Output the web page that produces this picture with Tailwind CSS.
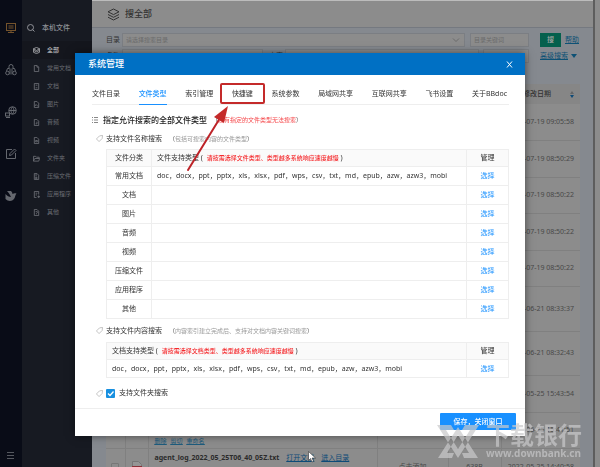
<!DOCTYPE html>
<html lang="zh-CN">
<head>
  <meta charset="UTF-8" />
  <meta name="viewport" content="width=device-width, initial-scale=1" />
  <title>系统管理</title>
  <script src="https://cdn.jsdelivr.net/npm/@tailwindcss/browser@4"></script>
</head>
<body class="h-screen overflow-hidden bg-[#85898f] font-['Noto_Sans','Noto_Sans_CJK_SC',sans-serif] text-[7px] leading-[10px] text-[#333]">

  <div class="flex h-full">
    <!-- Icon rail -->
    <nav class="flex w-[22px] shrink-0 flex-col items-center justify-between bg-[#090c17] pt-[22px] pb-2 text-[#65686f]" aria-label="模块">
      <div class="flex flex-col gap-[30px]">
        <a href="#" class="text-[#74532c]" aria-label="本机">
          <svg class="size-3" viewBox="0 0 12 12" fill="none" stroke="currentColor"><rect x="1.500" y="1.500" width="9" height="7"/><path d="M3.500 4h5M3.500 6h5M3 10.500h6M6 8.500v2"/></svg>
        </a>
        <a href="#" aria-label="团队">
          <svg class="size-3" viewBox="0 0 12 12" fill="none" stroke="currentColor"><path d="M4 5V2.500a2 2 0 0 1 4 0V5M5 4.500v6M7 4.500v6M4 4.500H2.500L1.500 7M8 4.500h1.500l1 2.500"/><circle cx="2.500" cy="9" r="1.800"/><circle cx="9.500" cy="9" r="1.800"/></svg>
        </a>
        <a href="#" aria-label="网络">
          <svg class="size-3" viewBox="0 0 12 12" fill="none" stroke="currentColor"><circle cx="7.500" cy="4.500" r="3.800"/><path d="M4 4.500h7M7.500 1c-2 2-2 5 0 7c2-2 2-5 0-7"/><rect x=".5" y="7" width="4" height="3" fill="#090c17"/><path d="M1 11.500h4"/></svg>
        </a>
        <a href="#" aria-label="编辑">
          <svg class="size-3" viewBox="0 0 12 12" fill="none" stroke="currentColor"><path d="M7 1.500H1.500v9h9V5M4.500 7.500l.5-2L9.500 1l1.500 1.500L6.500 7z"/></svg>
        </a>
        <a href="#" aria-label="飞书">
          <svg class="size-3" viewBox="0 0 12 12" fill="currentColor"><path d="M2 1h4c1 1 1.500 2 1.500 3C9 3 10 3 11.500 3.500C10 5 10.500 7 9 9c-2 2.500-6 2.500-8.500 0V4C2 6 4 7 6 7C5 5 4 3 2 1z"/></svg>
        </a>
      </div>
      <button type="button" aria-label="菜单" class="text-[#55585f]">
        <svg class="block size-2" viewBox="0 0 8 8" stroke="currentColor"><path d="M0 1.500h7M0 4.500h7M0 7.500h7"/></svg>
      </button>
    </nav>

    <!-- File categories -->
    <aside class="w-[70px] shrink-0 bg-[#171a22] pt-[20px] text-[6px] text-[#6a6d73]">
      <h2 class="flex h-4 items-center gap-[7px] pl-[5px] text-[7px] font-medium text-[#909298]">
        <svg class="size-2" viewBox="0 0 8 8" fill="none" stroke="currentColor"><circle cx="3.500" cy="3.500" r="3"/><path d="M5.500 5.500l2 2"/></svg>
        本机文件
      </h2>
      <ul class="pt-[5px]">
        <li><a href="#" class="flex h-[18px] items-center gap-[7px] bg-[#14161d] pl-[11px] font-bold text-[#a4a5a8]"><svg class="size-[7px]" viewBox="0 0 8 8" fill="none" stroke="currentColor"><path d="M4 .5l3.500 1.500L4 4L.5 2zM.5 2v4L4 7.500L7.500 6V2M1 4l3 1.500L7 4"/></svg>全部</a></li>
        <li><a href="#" class="flex h-[18px] items-center gap-[7px] pl-[11px]"><svg class="size-[7px]" viewBox="0 0 8 8" fill="none" stroke="currentColor"><path d="M1.500.5h3l2 2v5h-5zM4.500.5v2h2"/></svg>常用文档</a></li>
        <li><a href="#" class="flex h-[18px] items-center gap-[7px] pl-[11px]"><svg class="size-[7px]" viewBox="0 0 8 8" fill="none" stroke="currentColor"><path d="M1.500.5h5v7h-5zM3 2.500h2M3 5.500h2"/></svg>文档</a></li>
        <li><a href="#" class="flex h-[18px] items-center gap-[7px] pl-[11px]"><svg class="size-[7px]" viewBox="0 0 8 8" fill="none" stroke="currentColor"><path d="M1.500.5h3l2 2v5h-5zM2 6l1.500-2L6 6.500"/></svg>图片</a></li>
        <li><a href="#" class="flex h-[18px] items-center gap-[7px] pl-[11px]"><svg class="size-[7px]" viewBox="0 0 8 8" fill="none" stroke="currentColor"><path d="M1.500.5h3l2 2v5h-5zM4.500 3v2.500H3"/></svg>音频</a></li>
        <li><a href="#" class="flex h-[18px] items-center gap-[7px] pl-[11px]"><svg class="size-[7px]" viewBox="0 0 8 8" fill="none" stroke="currentColor"><path d="M1.500.5h3l2 2v5h-5zM3 4h2v1.500H3z"/></svg>视频</a></li>
        <li><a href="#" class="flex h-[18px] items-center gap-[7px] pl-[11px]"><svg class="size-[7px]" viewBox="0 0 8 8" fill="none" stroke="currentColor"><path d="M.5 7V1.500h2.500l1 1h3V4M.5 7l1.500-3h5.500L6.500 7z"/></svg>文件夹</a></li>
        <li><a href="#" class="flex h-[18px] items-center gap-[7px] pl-[11px]"><svg class="size-[7px]" viewBox="0 0 8 8" fill="none" stroke="currentColor"><path d="M1.500.5h3l2 2v5h-5zM3.500 1v3M3 5h1.500v1.500H3z"/></svg>压缩文件</a></li>
        <li><a href="#" class="flex h-[18px] items-center gap-[7px] pl-[11px]"><svg class="size-[7px]" viewBox="0 0 8 8" fill="none" stroke="currentColor"><path d="M6.500 4V.5h-5v7H4M3 2.500h2M3 4.500h1.500M5 6.500h3M6.500 5v3"/></svg>应用程序</a></li>
        <li><a href="#" class="flex h-[18px] items-center gap-[7px] pl-[11px]"><svg class="size-[7px]" viewBox="0 0 8 8" fill="none" stroke="currentColor"><path d="M1.500.5h3l2 2v5h-5zM3 3h2v1L4 5v1"/></svg>其他</a></li>
      </ul>
    </aside>

    <!-- Search page -->
    <main class="min-w-0 flex-1 overflow-hidden border-t border-[#bcbcbc]">
      <header class="flex h-[27px] items-center gap-[5px] border-b border-[#757980] bg-[#8c8c8c] px-[15px]">
        <svg class="size-[13px]" viewBox="0 0 13 13" fill="none" stroke="#333"><path d="M6.500 1L12 3.800L6.500 6.600L1 3.800zM1 6.500l5.500 2.800L12 6.500M1 9.200L6.500 12L12 9.200"/></svg>
        <h1 class="text-[9px] font-medium">搜全部</h1>
      </header>

      <form class="flex gap-[11px] py-[5px] pr-[13px] pl-[14px]">
        <div class="flex min-w-0 flex-1 flex-col gap-0.5">
          <div class="flex items-center gap-[2px]">
            <label for="dir" class="w-[14px]">目录</label>
            <div class="relative flex-1">
              <select id="dir" class="block h-[14px] w-full appearance-none border border-[#7b7e83] bg-[#8c8c8c] px-[3px] text-[6px] text-[#6b6b6b]"><option>请选择搜索目录</option></select>
              <svg class="pointer-events-none absolute top-1 right-[5px] h-1.5 w-2" viewBox="0 0 8 6" fill="none" stroke="#6b6b6b"><path d="M1 1.500l3 3l3-3"/></svg>
            </div>
            <input type="text" aria-label="目录关键词" placeholder="目录关键词" class="ml-[3px] h-[14px] w-[59px] border border-[#7b7e83] bg-[#8c8c8c] px-[3px] text-[6px] placeholder:text-[#6b6b6b]" />
          </div>
          <div class="flex items-center gap-[2px]">
            <label for="name" class="w-[14px]">名称</label>
            <input id="name" type="text" class="h-[14px] w-[141px] border border-[#7b7e83] bg-[#8c8c8c] px-[3px]" />
            <label for="content" class="ml-1 w-[14px]">内容</label>
            <input id="content" type="text" class="h-[14px] min-w-0 flex-1 border border-[#7b7e83] bg-[#8c8c8c] px-[3px]" />
            <input type="text" aria-label="内容关键词" class="ml-0.5 h-[14px] w-[46px] border border-[#7b7e83] bg-[#8c8c8c] px-[3px]" />
          </div>
        </div>
        <div class="flex w-10 flex-col gap-1 text-[#0d5175]">
          <div class="flex items-center gap-1">
            <button type="submit" class="h-[14px] w-[21px] bg-[#04604d] font-medium text-[#a5a5a5]">搜</button>
            <a href="#" class="underline">帮助</a>
          </div>
          <a href="#" class="flex items-center gap-[3px] whitespace-nowrap underline">高级搜索<svg class="h-1 w-1.5" viewBox="0 0 6 4" fill="currentColor"><path d="M0 0h6L3 4z"/></svg></a>
        </div>
      </form>

      <div class="pt-[16px] pr-[13px] pl-[14px]">
        <table class="w-full table-fixed border-collapse bg-[#8c8c8c] text-center text-[#484848]">
          <colgroup><col class="w-[19px]" /><col class="w-[23px]" /><col /><col class="w-[71px]" /><col class="w-[53px]" /><col class="w-[79px]" /></colgroup>
          <thead class="bg-[#868686]">
            <tr class="h-[20px]">
              <th colspan="5"></th>
              <th><div class="flex items-center justify-end gap-[19px] pr-[6px] font-medium text-[#333]">修改日期<svg class="h-[7px] w-1" viewBox="0 0 4 7"><path d="M2 0l2 3H0z" fill="#666"/><path d="M2 7l2-3H0z" fill="#0d4a77"/></svg></div></th>
            </tr>
          </thead>
          <tbody>
            <tr class="h-[36px] border-b border-[#808080]"><td colspan="5"></td><td class="pr-[6px] text-right whitespace-nowrap">2022-07-19 09:05:58</td></tr>
            <tr class="h-[37px] border-b border-[#808080]"><td colspan="5"></td><td class="pr-[6px] text-right whitespace-nowrap">2022-07-19 08:50:29</td></tr>
            <tr class="h-[36px] border-b border-[#808080]"><td colspan="5"></td><td class="pr-[6px] text-right whitespace-nowrap">2022-07-19 08:50:22</td></tr>
            <tr class="h-[37px] border-b border-[#808080]"><td colspan="5"></td><td class="pr-[6px] text-right whitespace-nowrap">2022-07-19 08:50:22</td></tr>
            <tr class="h-[36px] border-b border-[#808080]"><td colspan="5"></td><td class="pr-[6px] text-right whitespace-nowrap">2022-07-19 08:50:22</td></tr>
            <tr class="h-[45px] border-b border-[#808080]"><td colspan="5"></td><td class="pr-[6px] text-right whitespace-nowrap">2022-06-21 08:33:37</td></tr>
            <tr class="h-[44px] border-b border-[#808080]"><td colspan="5"></td><td class="pr-[6px] text-right whitespace-nowrap">2022-06-21 08:32:43</td></tr>
            <tr class="h-[37px] border-b border-[#808080]"><td colspan="5"></td><td class="pr-[6px] text-right whitespace-nowrap">2022-05-25 15:43:54</td></tr>
            <tr class="h-[36px] border-b border-[#808080]">
              <td class="border-r border-[#808080]"></td>
              <td class="border-r border-[#808080]"></td>
              <td class="border-r border-[#808080] pb-0.5 pl-[6px] text-left align-bottom">
                <div class="flex gap-1 text-[6px] text-[#1d5b7c] underline"><a href="#">删除</a><a href="#">剪切</a><a href="#">重命名</a></div>
              </td>
              <td class="border-r border-[#808080]"></td>
              <td class="border-r border-[#808080]"></td>
              <td class="pr-[6px] text-right whitespace-nowrap">2022-05-25 15:41:51</td>
            </tr>
            <tr class="h-[37px]">
              <td class="border-r border-[#808080]"><input type="checkbox" aria-label="选择文件" class="mx-auto block size-2 appearance-none rounded-[1px] border border-[#777] bg-[#8c8c8c]" /></td>
              <td class="border-r border-[#808080]"><svg class="mx-auto h-3 w-[10px]" viewBox="0 0 10 12"><path d="M.5.5h6l3 3v8h-9z" fill="#959595" stroke="#777"/><path d="M0 5h10v4H0z" fill="#8b3038"/></svg></td>
              <td class="border-r border-[#808080] pt-1 pl-[6px] text-left align-top whitespace-nowrap">
                <div class="flex gap-[7px]"><b class="text-[#2b2b2b]">agent_log_2022_05_25T06_40_05Z.txt</b><a href="#" class="text-[#0d4a77] underline">打开文档</a><a href="#" class="text-[#0d4a77] underline">进入目录</a></div>
              </td>
              <td class="border-r border-[#808080]">点击添加</td>
              <td class="border-r border-[#808080]">638B</td>
              <td class="pr-[6px] text-right whitespace-nowrap">2022-05-25 14:40:58</td>
            </tr>
          </tbody>
        </table>
      </div>
    </main>

    <!-- Window edge -->
    <div class="w-[7px] shrink-0 border-l-2 border-[#5d5d5d] bg-[#8c8c8c]"></div>
  </div>

  <!-- Settings dialog -->
  <div class="fixed inset-0 flex items-start justify-center pt-[53px]">
    <section role="dialog" aria-labelledby="dialog-title" class="w-3/4 bg-white shadow-[0_0_8px_rgba(0,0,0,0.5)]">
      <header class="flex h-[22px] items-center justify-between bg-[#0070c4] pr-3 pl-[13px] text-white">
        <h2 id="dialog-title" class="text-[9px] font-medium">系统管理</h2>
        <button type="button" aria-label="关闭"><svg class="size-[7px]" viewBox="0 0 7 7" stroke="currentColor"><path d="M1 .5l5 6M6 .5l-5 6"/></svg></button>
      </header>

      <div class="pt-2 pr-4 pl-[17px]">
        <nav class="relative flex h-[22px] justify-between border-b border-[#eee] pr-0.5 whitespace-nowrap">
          <a href="#" class="flex items-center">文件目录</a>
          <a href="#" class="-mb-px flex items-center border-b border-[#1890ff] font-medium text-[#1890ff]">文件类型</a>
          <a href="#" class="flex items-center">索引管理</a>
          <a href="#" class="relative flex items-center">快捷键
            <span class="absolute -inset-x-[12px] top-0 bottom-0 rounded-xs border-2 border-[#c42a2a]"></span>
            <svg class="absolute top-[21px] -left-[47px] z-10 h-[68px] w-[50px]" viewBox="0 0 50 68"><path d="M3 66L35 14" stroke="#bd2328" stroke-width="2" stroke-linecap="round"/><path d="M43 2L29 13L39 19z" fill="#c42a2a"/></svg>
          </a>
          <a href="#" class="flex items-center">系统参数</a>
          <a href="#" class="flex items-center">局域网共享</a>
          <a href="#" class="flex items-center">互联网共享</a>
          <a href="#" class="flex items-center">飞书设置</a>
          <a href="#" class="flex items-center">关于BBdoc</a>
        </nav>

        <h3 class="flex h-[29px] items-center gap-[5px] text-[8px] font-medium text-[#222]">
          <svg class="size-[6px]" viewBox="0 0 6 6" stroke="#888"><path d="M0 .5h1M2 .5h4M0 3h1M2 3h4M0 5.500h1M2 5.500h4"/></svg>
          指定允许搜索的全部文件类型
          <small class="text-[6px] font-normal text-[#555]">（<span class="text-[#f5474a]">没有指定的文件类型无法搜索</span>）</small>
        </h3>

        <div class="pl-1">
          <h4 class="flex h-[15px] items-start gap-[3px]">
            <svg class="mt-px size-[7px]" viewBox="0 0 8 8" fill="none" stroke="#aaa" stroke-width=".8"><path d="M.5 4.500L4 1l3.500-.5L7 4L3.500 7.500z"/></svg>
            支持文件名称搜索 <small class="pl-1 text-[6px] text-[#555]">（<span class="text-[#999]">包括可搜索内容的文件类型</span>）</small>
          </h4>
          <div class="pl-[10px]">
            <table class="w-full table-fixed border-collapse border border-[#eee] text-center">
              <colgroup><col class="w-[45px]" /><col /><col class="w-[42px]" /></colgroup>
              <thead class="bg-[#fafafa]">
                <tr class="h-[17px]">
                  <th class="border border-[#eee] font-normal">文件分类</th>
                  <th class="border border-[#eee] pl-[5px] text-left font-normal">文件支持类型 ( <b class="pl-0.5 text-[6px] font-medium text-[#f52a2d]">请按需选择文件类型、类型越多系统响应速度越慢</b> )</th>
                  <th class="border border-[#eee] font-normal">管理</th>
                </tr>
              </thead>
              <tbody>
                <tr class="h-[19px]"><td class="border border-[#eee]">常用文档</td><td class="border border-[#eee] pl-[5px] text-left">doc，docx，ppt，pptx，xls，xlsx，pdf，wps，csv，txt，md，epub，azw，azw3，mobi</td><td class="border border-[#eee]"><a href="#" class="text-[#1890ff]">选择</a></td></tr>
                <tr class="h-[19px]"><td class="border border-[#eee]">文档</td><td class="border border-[#eee]"></td><td class="border border-[#eee]"><a href="#" class="text-[#1890ff]">选择</a></td></tr>
                <tr class="h-[19px]"><td class="border border-[#eee]">图片</td><td class="border border-[#eee]"></td><td class="border border-[#eee]"><a href="#" class="text-[#1890ff]">选择</a></td></tr>
                <tr class="h-[19px]"><td class="border border-[#eee]">音频</td><td class="border border-[#eee]"></td><td class="border border-[#eee]"><a href="#" class="text-[#1890ff]">选择</a></td></tr>
                <tr class="h-[19px]"><td class="border border-[#eee]">视频</td><td class="border border-[#eee]"></td><td class="border border-[#eee]"><a href="#" class="text-[#1890ff]">选择</a></td></tr>
                <tr class="h-[19px]"><td class="border border-[#eee]">压缩文件</td><td class="border border-[#eee]"></td><td class="border border-[#eee]"><a href="#" class="text-[#1890ff]">选择</a></td></tr>
                <tr class="h-[19px]"><td class="border border-[#eee]">应用程序</td><td class="border border-[#eee]"></td><td class="border border-[#eee]"><a href="#" class="text-[#1890ff]">选择</a></td></tr>
                <tr class="h-[19px]"><td class="border border-[#eee]">其他</td><td class="border border-[#eee]"></td><td class="border border-[#eee]"><a href="#" class="text-[#1890ff]">选择</a></td></tr>
              </tbody>
            </table>
          </div>

          <h4 class="flex h-[23px] items-center gap-[3px]">
            <svg class="size-[7px]" viewBox="0 0 8 8" fill="none" stroke="#aaa" stroke-width=".8"><path d="M.5 4.500L4 1l3.500-.5L7 4L3.500 7.500z"/></svg>
            支持文件内容搜索 <small class="pl-1 text-[6px] text-[#555]">（<span class="text-[#999]">内容索引建立完成后、支持对文档内容关键词搜索</span>）</small>
          </h4>
          <div class="pl-[10px]">
            <table class="w-full table-fixed border-collapse border border-[#eee] text-center">
              <colgroup><col /><col class="w-[42px]" /></colgroup>
              <thead class="bg-[#fafafa]">
                <tr class="h-[17px]">
                  <th class="border border-[#eee] pl-[5px] text-left font-normal">文档支持类型 ( <b class="pl-0.5 text-[6px] font-medium text-[#f52a2d]">请按需选择文档类型、类型越多系统响应速度越慢</b> )</th>
                  <th class="border border-[#eee] font-normal">管理</th>
                </tr>
              </thead>
              <tbody>
                <tr class="h-[18px]"><td class="border border-[#eee] pl-[5px] text-left">doc，docx，ppt，pptx，xls，xlsx，pdf，wps，csv，txt，md，epub，azw，azw3，mobi</td><td class="border border-[#eee]"><a href="#" class="text-[#1890ff]">选择</a></td></tr>
              </tbody>
            </table>
          </div>

          <div class="flex h-[30px] items-center gap-[3px]">
            <svg class="size-[7px]" viewBox="0 0 8 8" fill="none" stroke="#aaa" stroke-width=".8"><path d="M.5 4.500L4 1l3.500-.5L7 4L3.500 7.500z"/></svg>
            <label class="flex items-center gap-1">
              <span class="relative block size-[9px]">
                <input type="checkbox" checked class="block size-[9px] appearance-none rounded-[1px] bg-[#1890e0]" />
                <svg class="pointer-events-none absolute inset-0" viewBox="0 0 9 9" fill="none" stroke="#fff" stroke-width="1.300"><path d="M2 4.500l2 2l3.500-4"/></svg>
              </span>
              支持文件夹搜索
            </label>
          </div>
        </div>
      </div>

      <footer class="flex h-[28px] items-start justify-end border-t border-[#eee] pt-1 pr-[9px]">
        <button type="button" class="h-[17px] w-[76px] rounded-[1px] bg-[#1890ff] font-medium text-white">保存，关闭窗口</button>
      </footer>
    </section>
  </div>

  <!-- Site watermark -->
  <div class="pointer-events-none fixed right-[18px] bottom-2 flex items-center gap-[7px] text-[#c9c9cb]/70">
    <svg class="h-[33px] w-[42px]" viewBox="0 0 42 33" fill="currentColor" fill-rule="evenodd"><path d="M0 0h14l3 5h-8l12 19L33 5h-8l3-5h14L21 33zM21 2l20 31H27l-2-5h7L21 10L10 28h7l-2 5H1z"/></svg>
    <div class="font-bold">
      <p class="text-[24px] leading-[24px]">下载银行</p>
      <p class="text-[10px] leading-[12px]">www.downbank.cn</p>
    </div>
  </div>

  <!-- Pointer -->
  <svg class="pointer-events-none fixed bottom-1 left-[308px] h-3 w-2" viewBox="0 0 8 12"><path d="M.5.5v9l2-2l1.500 3.500l1.500-.7L4 7h3.500z" fill="#fff" stroke="#333" stroke-width=".6"/></svg>
</body>
</html>
